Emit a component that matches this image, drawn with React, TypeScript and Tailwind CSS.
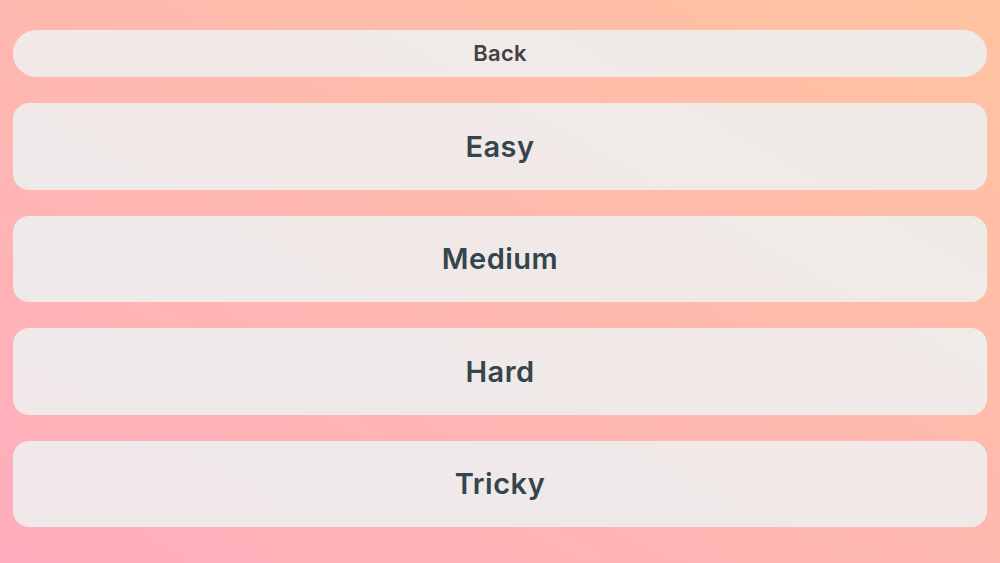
export default function App() {
  const levels = ['Easy', 'Medium', 'Hard', 'Tricky'];
  return (
    <div className="h-[563px] w-[1000px] bg-linear-to-tr from-[#ffadbd] to-[#ffc3a0] px-[13px] pt-[30px] pb-[36px] font-['Inter',sans-serif] flex flex-col">
      <button className="h-[47px] w-full rounded-full bg-[#eeeeee]/90 text-[22px] font-semibold tracking-[0.2px] text-[#424242]">
        Back
      </button>
      <div className="mt-[26px] flex flex-1 flex-col gap-[26px]">
        {levels.map((l) => (
          <button
            key={l}
            className="flex-1 w-full rounded-[16px] bg-[#eeeeee]/90 text-[29px] font-semibold tracking-[0.5px] text-[#35454e]"
          >
            {l}
          </button>
        ))}
      </div>
    </div>
  );
}
